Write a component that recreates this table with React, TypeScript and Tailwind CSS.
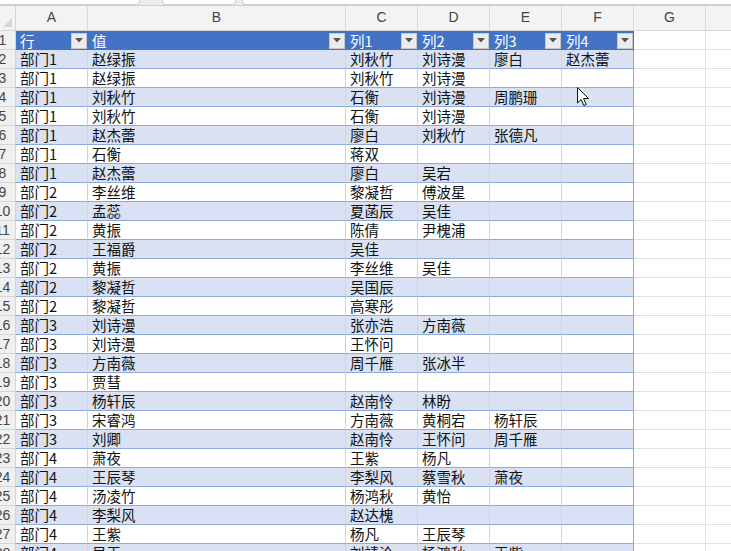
const colWidths = ['w-[72px]', 'w-[258px]', 'w-[72px]', 'w-[72px]', 'w-[72px]', 'w-[72px]'];
const letters = ['A', 'B', 'C', 'D', 'E', 'F'];
const headers = ['行', '值', '列1', '列2', '列3', '列4'];

const rows: string[][] = [
  ['部门1', '赵绿振', '刘秋竹', '刘诗漫', '廖白', '赵杰蕾'],
  ['部门1', '赵绿振', '刘秋竹', '刘诗漫', '', ''],
  ['部门1', '刘秋竹', '石衡', '刘诗漫', '周鹏珊', ''],
  ['部门1', '刘秋竹', '石衡', '刘诗漫', '', ''],
  ['部门1', '赵杰蕾', '廖白', '刘秋竹', '张德凡', ''],
  ['部门1', '石衡', '蒋双', '', '', ''],
  ['部门1', '赵杰蕾', '廖白', '吴宕', '', ''],
  ['部门2', '李丝维', '黎凝哲', '傅波星', '', ''],
  ['部门2', '孟蕊', '夏菡辰', '吴佳', '', ''],
  ['部门2', '黄振', '陈倩', '尹槐浦', '', ''],
  ['部门2', '王福爵', '吴佳', '', '', ''],
  ['部门2', '黄振', '李丝维', '吴佳', '', ''],
  ['部门2', '黎凝哲', '吴国辰', '', '', ''],
  ['部门2', '黎凝哲', '高寒彤', '', '', ''],
  ['部门3', '刘诗漫', '张亦浩', '方南薇', '', ''],
  ['部门3', '刘诗漫', '王怀问', '', '', ''],
  ['部门3', '方南薇', '周千雁', '张冰半', '', ''],
  ['部门3', '贾彗', '', '', '', ''],
  ['部门3', '杨轩辰', '赵南怜', '林盼', '', ''],
  ['部门3', '宋睿鸿', '方南薇', '黄桐宕', '杨轩辰', ''],
  ['部门3', '刘卿', '赵南怜', '王怀问', '周千雁', ''],
  ['部门4', '萧夜', '王紫', '杨凡', '', ''],
  ['部门4', '王辰琴', '李梨风', '蔡雪秋', '萧夜', ''],
  ['部门4', '汤凌竹', '杨鸿秋', '黄怡', '', ''],
  ['部门4', '李梨风', '赵达槐', '', '', ''],
  ['部门4', '王紫', '杨凡', '王辰琴', '', ''],
  ['部门4', '吴玉', '刘靖沧', '杨鸿秋', '王紫', ''],
];

const cjk = { fontFamily: '"Noto Sans CJK SC", "Noto Sans", sans-serif' };

const RowNum = ({ n }: { n: number }) => (
  <div className="w-[16px] shrink-0 h-full overflow-hidden flex justify-center pr-[10px] bg-[#f0f0f0] border-r border-b border-[#d4d4d4] text-[14px] leading-[18px] text-[#444] font-['Liberation_Sans',sans-serif] whitespace-nowrap">
    {n}
  </div>
);

const FilterButton = () => (
  <div className="w-[16px] h-[16px] shrink-0 bg-[#ececec] border border-[#c8c8c8] flex items-center justify-center">
    <svg width="8" height="5" viewBox="0 0 8 5">
      <path d="M0 0 H8 L4 4.5 Z" fill="#555" />
    </svg>
  </div>
);

const Cursor = () => (
  <svg className="absolute left-[577px] top-[87px]" width="13" height="20" viewBox="0 0 13 20">
    <path
      d="M0.5 0.5 L0.5 16 L4.2 12.4 L6.8 18.5 L9.2 17.5 L6.6 11.5 L11.5 11.5 Z"
      fill="#fff"
      stroke="#111"
      strokeWidth="1"
      strokeLinejoin="miter"
    />
  </svg>
);

export default function App() {
  return (
    <div className="relative w-[731px] h-[551px] overflow-hidden bg-white select-none" style={cjk}>
      {/* top tab strip */}
      <div className="h-[6px] flex bg-[#ececec] border-b border-[#cfcfcf]">
        <div className="w-[140px] bg-white border-r border-b border-[#cfcfcf] rounded-br-[4px]" />
        <div className="w-[74px] ml-[22px] bg-white border-x border-b border-[#cfcfcf] rounded-b-[4px]" />
        <div className="flex-1 ml-[6px] bg-white border-l border-b border-[#cfcfcf] rounded-bl-[4px]" />
      </div>

      {/* column letters */}
      <div className="flex h-[25px] bg-[#f3f3f3] border-b border-[#d4d4d4] text-[#444] text-[14px] font-['Liberation_Sans',sans-serif]">
        <div className="w-[16px] shrink-0 border-r border-[#d4d4d4] relative">
          <svg className="absolute right-[3px] bottom-[3px]" width="9" height="9" viewBox="0 0 9 9">
            <path d="M9 0 V9 H0 Z" fill="#d6d6d6" />
          </svg>
        </div>
        {letters.map((l, i) => (
          <div key={l} className={`${colWidths[i]} shrink-0 border-r border-[#dadada] flex items-end justify-center pb-[2px]`}>
            {l}
          </div>
        ))}
        <div className="w-[72px] shrink-0 border-r border-[#dadada] flex items-end justify-center pb-[2px]">G</div>
        <div className="flex-1" />
      </div>

      {/* header row */}
      <div className="flex h-[19px]">
        <RowNum n={1} />
        {headers.map((h, i) => (
          <div
            key={h}
            className={`${colWidths[i]} shrink-0 bg-[#4472c4] flex items-center justify-between pl-1 pr-[1px] text-white text-[14.5px] leading-[18px]`}
          >
            <span>{h}</span>
            <FilterButton />
          </div>
        ))}
        <div className="w-[72px] shrink-0 border-r border-b border-[#e1e1e1]" />
        <div className="flex-1 border-b border-[#e1e1e1]" />
      </div>

      {/* data rows */}
      {rows.map((r, ri) => (
        <div key={ri} className="flex h-[19px]">
          <RowNum n={ri + 2} />
          {r.map((v, ci) => (
            <div
              key={ci}
              className={`${colWidths[ci]} shrink-0 ${ri % 2 === 0 ? 'bg-[#d9e1f2]' : 'bg-white'} border-b border-[#8ea9db] ${ci === 5 ? 'border-r border-r-[#8ea9db]' : 'border-r border-r-[#d4d4d4]'} pl-1 text-[14.5px] leading-[18px] text-[#111] whitespace-nowrap`}
            >
              {v}
            </div>
          ))}
          <div className="w-[72px] shrink-0 border-r border-b border-[#e1e1e1]" />
          <div className="flex-1 border-b border-[#e1e1e1]" />
        </div>
      ))}

      <Cursor />
    </div>
  );
}
